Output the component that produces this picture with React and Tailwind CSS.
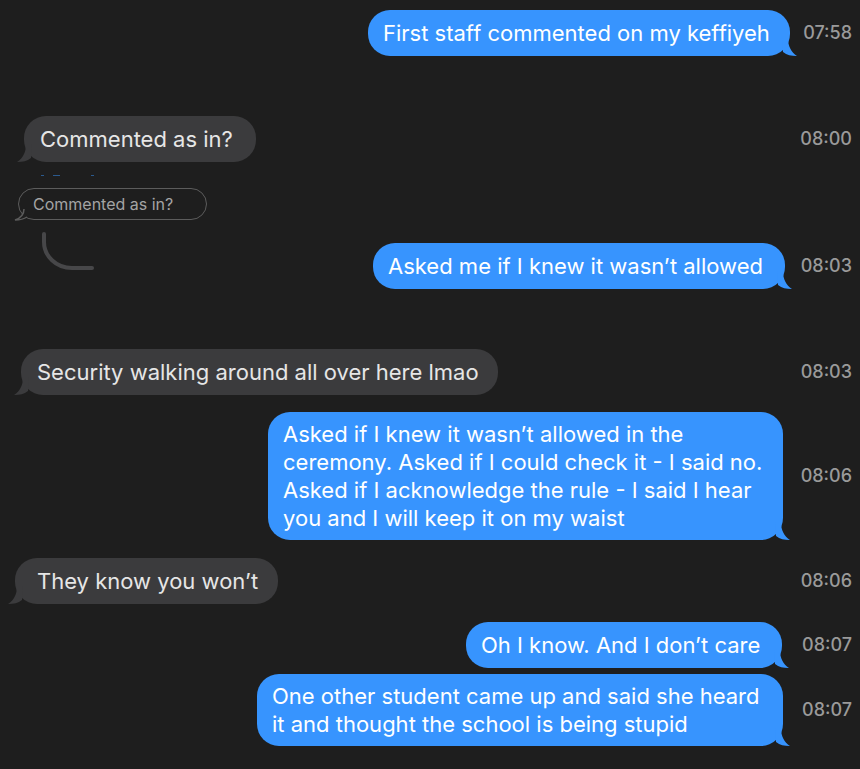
import React from "react";

const BLUE = "#3794fe";
const GRAY = "#3b3b3d";

function TailRight({ color }) {
  return (
    <svg className="absolute bottom-0 right-[-8px]" width="16" height="18" viewBox="0 0 16 18">
      <path d="M0 0 L6 0 C6 8 9 14 15 18 C9 18 5 17 1 14 Z" fill={color} />
    </svg>
  );
}

function TailLeft({ color }) {
  return (
    <svg className="absolute bottom-0 left-[-8px]" width="16" height="18" viewBox="0 0 16 18">
      <path d="M16 0 L10 0 C10 8 7 14 1 18 C7 18 11 17 15 14 Z" fill={color} />
    </svg>
  );
}

function Time({ t }) {
  return (
    <div className="w-[58px] shrink-0 text-right text-[18px] font-medium text-[#9a9a9a] leading-none">
      {t}
    </div>
  );
}

function Out({ w, right, mt, lines, time }) {
  const multi = lines.length > 1;
  return (
    <div className={`flex items-center justify-end pr-[8px] ${mt}`}>
      <div
        className={`relative rounded-[22px] bg-[#3794fe] pl-[15px] text-[22px] text-white whitespace-nowrap ${
          multi ? "py-[8px] leading-[28px]" : "py-[10px] leading-[26px]"
        } ${w} ${right}`}
      >
        {lines.map((l, i) => (
          <div key={i}>{l}</div>
        ))}
        <TailRight color={BLUE} />
      </div>
      <Time t={time} />
    </div>
  );
}

function In({ w, left, mt, text, time }) {
  return (
    <div className={`flex items-center justify-between pr-[8px] ${mt}`}>
      <div
        className={`relative rounded-[22px] bg-[#3b3b3d] py-[10px] text-[22px] leading-[26px] text-[#e6e6e6] whitespace-nowrap ${w} ${left}`}
      >
        {text}
        <TailLeft color={GRAY} />
      </div>
      <Time t={time} />
    </div>
  );
}

export default function App() {
  return (
    <div
      className="w-[860px] h-[769px] overflow-hidden bg-[#1e1e1e] flex flex-col"
      style={{ fontFamily: "Inter, 'Noto Sans', sans-serif" }}
    >
      <Out
        mt="mt-[10px]"
        w="w-[422px]"
        right="mr-[4px]"
        lines={["First staff commented on my keffiyeh"]}
        time="07:58"
      />
      <In mt="mt-[60px]" w="w-[232px]" left="ml-[24px] pl-[16px]" text="Commented as in?" time="08:00" />
      <div className="mt-[13px] h-[2px] flex gap-[9px] pl-[41px]">
        <div className="w-[3px] h-[1px] bg-[#2b5a8e]" />
        <div className="w-[7px] h-[1px] bg-[#2b5a8e]" />
        <div className="ml-[22px] w-[3px] h-[1px] bg-[#2b5a8e]" />
      </div>
      <div className="relative mt-[11px] pl-[18px] h-[32px]">
        <div className="relative w-[189px] h-[32px] rounded-full border-[1.5px] border-[#5c5c5c] pl-[14px] flex items-center text-[16px] text-[#a4a4a4]">
          Commented as in?
          <svg className="absolute left-[-5px] bottom-[-1.5px]" width="14" height="14" viewBox="0 0 14 14">
            <path d="M10 2 C10 7 7 11 1 13 C6 13 10 12 13 10" fill="#1e1e1e" stroke="#5c5c5c" strokeWidth="1.5" />
          </svg>
        </div>
        <svg className="absolute left-[40px] top-[44px]" width="60" height="42" viewBox="0 0 60 42">
          <path d="M4 2 L4 10 C4 24 16 36 32 36 L52 36" fill="none" stroke="#474749" strokeWidth="4" strokeLinecap="round" />
        </svg>
      </div>
      <Out
        mt="mt-[23px]"
        w="w-[412px]"
        right="mr-[9px]"
        lines={["Asked me if I knew it wasn’t allowed"]}
        time="08:03"
      />
      <In
        mt="mt-[60px]"
        w="w-[477px]"
        left="ml-[21px] pl-[16px]"
        text="Security walking around all over here lmao"
        time="08:03"
      />
      <Out
        mt="mt-[17px]"
        w="w-[515px]"
        right="mr-[11px]"
        lines={[
          "Asked if I knew it wasn’t allowed in the",
          "ceremony. Asked if I could check it - I said no.",
          "Asked if I acknowledge the rule - I said I hear",
          "you and I will keep it on my waist",
        ]}
        time="08:06"
      />
      <In mt="mt-[18px]" w="w-[263px]" left="ml-[15px] pl-[22px]" text="They know you won’t" time="08:06" />
      <Out
        mt="mt-[18px]"
        w="w-[316px]"
        right="mr-[12px]"
        lines={["Oh I know. And I don’t care"]}
        time="08:07"
      />
      <Out
        mt="mt-[6px]"
        w="w-[526px]"
        right="mr-[11px]"
        lines={[
          "One other student came up and said she heard",
          "it and thought the school is being stupid",
        ]}
        time="08:07"
      />
    </div>
  );
}
